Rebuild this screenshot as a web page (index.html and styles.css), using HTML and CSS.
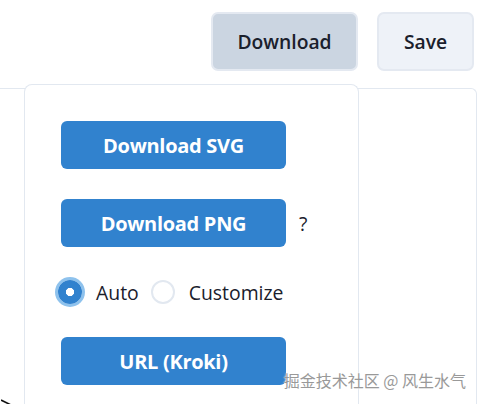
FILE: index.html
```html
<!DOCTYPE html>
<html>
<head>
<meta charset="utf-8">
<link rel="stylesheet" href="styles.css">
</head>
<body>
<div class="topbar">
  <button class="tbtn tbtn-dl">Download</button>
  <button class="tbtn tbtn-save">Save</button>
</div>
<div class="panel">
  <svg class="stroke" width="20" height="10" viewBox="0 0 20 10"><path d="M0 3 L12 9" stroke="#111" stroke-width="1.6" fill="none"/></svg>
</div>
<div class="popover">
  <button class="pbtn">Download SVG</button>
  <div class="row">
    <button class="pbtn">Download PNG</button>
    <span class="help">?</span>
  </div>
  <div class="radios">
    <label class="radio"><span class="ctrl checked"></span><span class="lbl">Auto</span></label>
    <label class="radio"><span class="ctrl"></span><span class="lbl">Customize</span></label>
  </div>
  <button class="pbtn">URL (Kroki)</button>
</div>
<div class="watermark">掘金技术社区 @ 风生水气</div>
</body>
</html>
```
FILE: styles.css
```css
html, body {
  margin: 0;
  padding: 0;
  height: 100%;
  overflow: hidden;
  background: #fff;
  font-family: "Open Sans", "Noto Sans", sans-serif;
  color: #1a202c;
}
body {
  position: relative;
}
.topbar {
  display: flex;
  justify-content: flex-end;
  gap: 19px;
  padding: 12px 5px 0 0;
}
.tbtn {
  height: 59px;
  border: 2px solid #e4e9f1;
  border-radius: 7px;
  font-family: inherit;
  font-size: 19.3px;
  font-weight: 600;
  color: #1a202c;
  padding: 0;
}
.tbtn-dl {
  width: 147px;
  background: #cbd5e1;
}
.tbtn-save {
  width: 97px;
  background: #eef2f8;
}
.panel {
  position: relative;
  box-sizing: border-box;
  margin: 17px 2px 0 -10px;
  height: 316px;
  border: 1px solid #e2e8f0;
  border-bottom: none;
  border-radius: 6px 6px 0 0;
}
.stroke {
  position: absolute;
  left: 10px;
  top: 308px;
}
.popover {
  position: absolute;
  left: 24px;
  top: 84px;
  bottom: 0;
  width: 297px;
  padding: 36px 0 0 36px;
  background: #fff;
  border: 1px solid #e2e8f0;
  border-bottom: none;
  border-radius: 8px 8px 0 0;
  display: flex;
  flex-direction: column;
  gap: 30px;
  overflow: hidden;
}
.pbtn {
  flex: none;
  width: 225px;
  height: 48px;
  border: none;
  border-radius: 6px;
  background: #3182ce;
  color: #fff;
  font-family: inherit;
  font-size: 20px;
  font-weight: 700;
  letter-spacing: -0.3px;
  padding: 0;
}
.row {
  display: flex;
  align-items: center;
}
.help {
  margin-left: 13px;
  font-size: 19.5px;
  color: #1a202c;
}
.radios {
  display: flex;
  align-items: center;
  flex: none;
  height: 30px;
  margin-left: -3px;
}
.radio {
  display: flex;
  align-items: center;
  margin-right: 12px;
}
.ctrl {
  box-sizing: border-box;
  width: 24px;
  height: 24px;
  border-radius: 50%;
  border: 2px solid #e2e8f0;
  background: #fff;
}
.ctrl.checked {
  border-color: #3182ce;
  background: radial-gradient(circle, #fff 0 3.8px, #3182ce 4.4px);
  box-shadow: 0 0 0 3px rgba(66, 153, 225, 0.6);
}
.lbl {
  margin-left: 14px;
  font-size: 19.4px;
  color: #1a202c;
}
.watermark {
  position: absolute;
  right: 13px;
  bottom: 12px;
  font-family: "Noto Sans CJK SC", sans-serif;
  font-size: 16px;
  color: #999;
  text-shadow: 0 0 2px #fff, 0 0 2px #fff;
}
```
